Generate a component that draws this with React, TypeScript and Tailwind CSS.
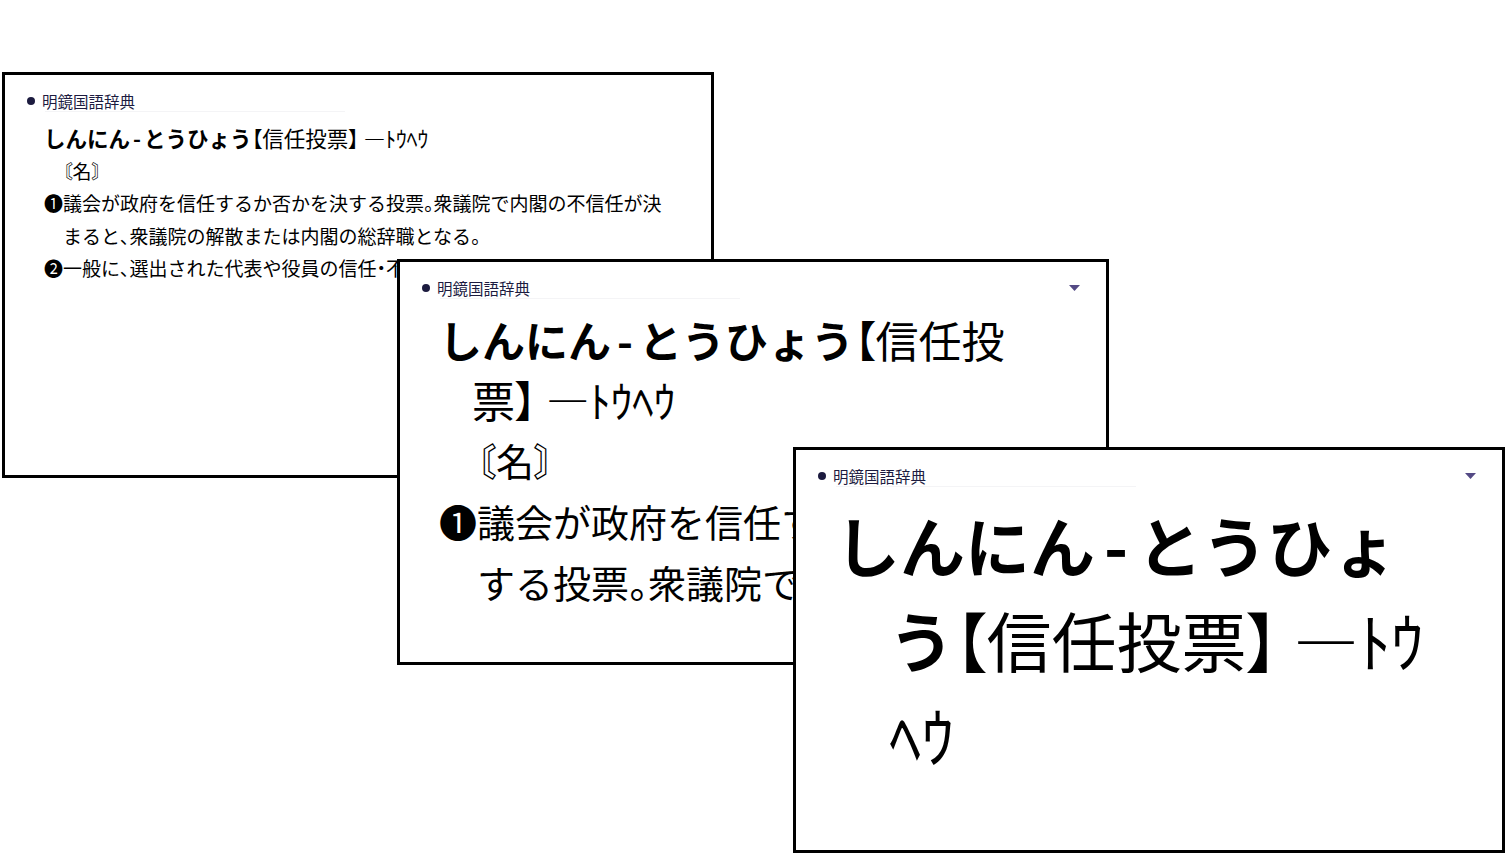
import React from "react";

// Each dictionary pane shows the same entry at a different zoom level
interface PaneScale {
  pos: string;
  head: string;
  headIndent: string;
  body: string;
  bodyIndent: string;
  noteIndent: string;
  padRight: string;
  menu: boolean;
}

const PANES: PaneScale[] = [
  {
    pos: "left-[2px] top-[72px]",
    head: "text-[21.5px] leading-[32.5px]",
    headIndent: "pl-[18px] -indent-[18px]",
    body: "text-[19px] leading-[32.5px]",
    bodyIndent: "pl-[19px] -indent-[19px]",
    noteIndent: "pl-[19px]",
    padRight: "pr-[40px]",
    menu: false,
  },
  {
    pos: "left-[397px] top-[259px]",
    head: "text-[43px] leading-[60px]",
    headIndent: "pl-[33px] -indent-[33px]",
    body: "text-[38px] leading-[61px]",
    bodyIndent: "pl-[38px] -indent-[38px]",
    noteIndent: "pl-[38px]",
    padRight: "pr-[40px]",
    menu: true,
  },
  {
    pos: "left-[793px] top-[447px]",
    head: "text-[65px] leading-[95px]",
    headIndent: "pl-[54px] -indent-[54px]",
    body: "text-[57px] leading-[95px]",
    bodyIndent: "pl-[57px] -indent-[57px]",
    noteIndent: "pl-[57px]",
    padRight: "pr-[56px]",
    menu: true,
  },
];

// Brackets and punctuation are set half-width, kana and kanji stay full-width
function Tight({ text }: { text: string }) {
  const parts = text.split(/([。、【】〘〙・])/);
  return (
    <>
      {parts.map((part, i) =>
        i % 2 === 1 ? (
          <span key={i} className="[font-feature-settings:'palt']">
            {part}
          </span>
        ) : (
          part
        )
      )}
    </>
  );
}

function DictPane({ scale }: { scale: PaneScale }) {
  return (
    <div
      className={`absolute ${scale.pos} w-[712px] h-[406px] border-[3px] border-black bg-white font-['Noto_Sans_CJK_JP',sans-serif]`}
    >
      {/* Header */}
      <div className="flex items-center justify-between pl-[22px] pr-[26px] pt-[16px] h-[36px]">
        <div className="flex items-center gap-[7px] text-[15.5px] leading-[20px] text-[#1c1b3f]">
          <span className="w-[8px] h-[8px] rounded-full bg-[#1c1b3f]" />
          <span>明鏡国語辞典</span>
        </div>
        {scale.menu && (
          <svg width="11" height="6" viewBox="0 0 11 6">
            <path d="M0 0 H11 L5.5 6 Z" fill="#544a85" />
          </svg>
        )}
      </div>
      <div className="ml-[40px] w-[300px] border-b border-[#f4f4f6]" />

      {/* Entry */}
      <div
        className={`mt-[10px] h-[295px] overflow-hidden pl-[39px] ${scale.padRight} text-black`}
      >
        <p className={`${scale.head} ${scale.headIndent}`}>
          <span className="font-bold">
            しんにん<span className="mx-[0.14em]">-</span>とうひょう
          </span>
          <Tight text="【信任投票】" /> ―ﾄｳﾍｳ
        </p>
        <p className={`${scale.body} ${scale.noteIndent}`}>
          <Tight text="〘名〙" />
        </p>
        <p className={`${scale.body} ${scale.bodyIndent}`}>
          <Tight text="❶議会が政府を信任するか否かを決する投票。衆議院で内閣の不信任が決まると、衆議院の解散または内閣の総辞職となる。" />
        </p>
        <p className={`${scale.body} ${scale.bodyIndent}`}>
          <Tight text="❷一般に、選出された代表や役員の信任・不信任を問う投票。" />
        </p>
      </div>
    </div>
  );
}

export default function App() {
  return (
    <div className="relative w-[1506px] h-[856px] overflow-hidden bg-white">
      {PANES.map((scale, i) => (
        <DictPane key={i} scale={scale} />
      ))}
    </div>
  );
}
